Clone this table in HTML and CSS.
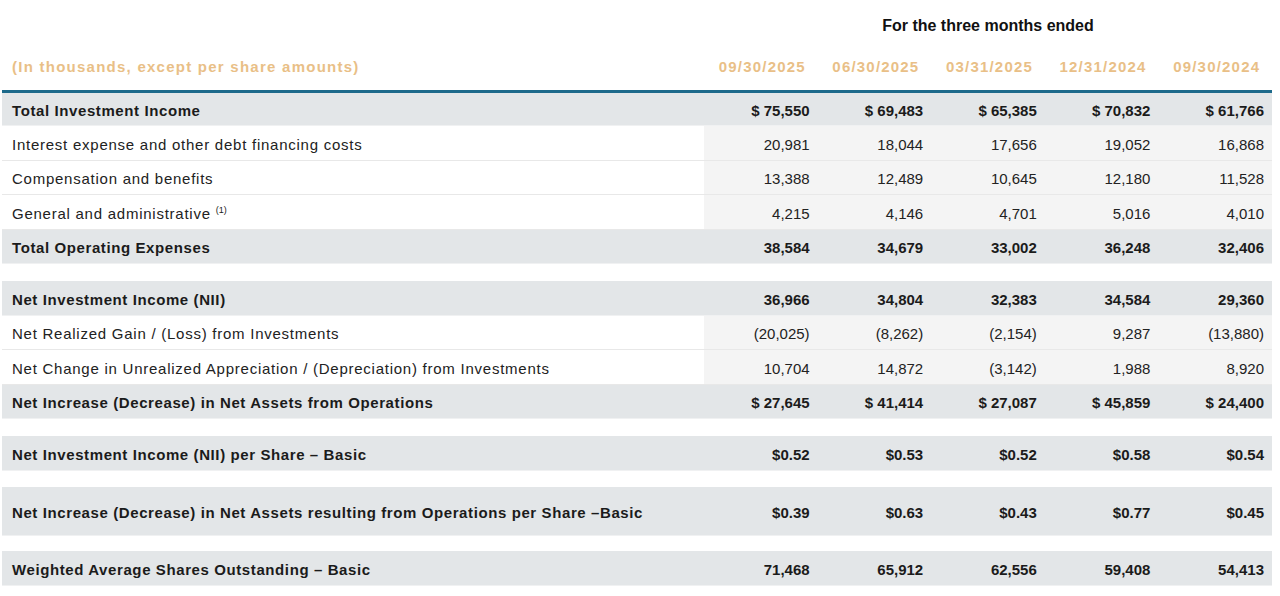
FILE: index.html
```html
<!DOCTYPE html>
<html>
<head>
<meta charset="utf-8">
<link rel="stylesheet" href="styles.css">
</head>
<body>
<div class="wrap">
<table class="fin">
  <colgroup>
    <col class="c-label"><col class="c-num"><col class="c-num"><col class="c-num"><col class="c-num"><col class="c-num">
  </colgroup>
  <thead>
    <tr class="period">
      <th></th>
      <th colspan="5">For the three months ended</th>
    </tr>
    <tr class="dates">
      <th class="label">(In thousands, except per share amounts)</th>
      <th>09/30/2025</th><th>06/30/2025</th><th>03/31/2025</th><th>12/31/2024</th><th>09/30/2024</th>
    </tr>
  </thead>
  <tbody>
    <tr class="total"><td>Total Investment Income</td><td>$ 75,550</td><td>$ 69,483</td><td>$ 65,385</td><td>$ 70,832</td><td>$ 61,766</td></tr>
    <tr class="item"><td>Interest expense and other debt financing costs</td><td>20,981</td><td>18,044</td><td>17,656</td><td>19,052</td><td>16,868</td></tr>
    <tr class="item"><td>Compensation and benefits</td><td>13,388</td><td>12,489</td><td>10,645</td><td>12,180</td><td>11,528</td></tr>
    <tr class="item"><td>General and administrative <sup>(1)</sup></td><td>4,215</td><td>4,146</td><td>4,701</td><td>5,016</td><td>4,010</td></tr>
    <tr class="total"><td>Total Operating Expenses</td><td>38,584</td><td>34,679</td><td>33,002</td><td>36,248</td><td>32,406</td></tr>
    <tr class="spacer"><td colspan="6"></td></tr>
    <tr class="total"><td>Net Investment Income (NII)</td><td>36,966</td><td>34,804</td><td>32,383</td><td>34,584</td><td>29,360</td></tr>
    <tr class="item"><td>Net Realized Gain / (Loss) from Investments</td><td>(20,025)</td><td>(8,262)</td><td>(2,154)</td><td>9,287</td><td>(13,880)</td></tr>
    <tr class="item"><td>Net Change in Unrealized Appreciation / (Depreciation) from Investments</td><td>10,704</td><td>14,872</td><td>(3,142)</td><td>1,988</td><td>8,920</td></tr>
    <tr class="total"><td>Net Increase (Decrease) in Net Assets from Operations</td><td>$ 27,645</td><td>$ 41,414</td><td>$ 27,087</td><td>$ 45,859</td><td>$ 24,400</td></tr>
    <tr class="spacer"><td colspan="6"></td></tr>
    <tr class="total"><td>Net Investment Income (NII) per Share – Basic</td><td>$0.52</td><td>$0.53</td><td>$0.52</td><td>$0.58</td><td>$0.54</td></tr>
    <tr class="spacer"><td colspan="6"></td></tr>
    <tr class="total tall"><td>Net Increase (Decrease) in Net Assets resulting from Operations per Share –Basic</td><td>$0.39</td><td>$0.63</td><td>$0.43</td><td>$0.77</td><td>$0.45</td></tr>
    <tr class="spacer short"><td colspan="6"></td></tr>
    <tr class="total"><td>Weighted Average Shares Outstanding – Basic</td><td>71,468</td><td>65,912</td><td>62,556</td><td>59,408</td><td>54,413</td></tr>
  </tbody>
</table>
</div>
</body>
</html>
```

FILE: styles.css
```css
html, body {
  margin: 0;
  padding: 0;
  background: #ffffff;
}

.wrap {
  padding: 0 8px 0 2px;
}

.fin {
  width: 1270px;
  border-collapse: collapse;
  table-layout: fixed;
  font-family: "Liberation Sans", Arial, sans-serif;
  color: #1b1b1b;
}

.c-label { width: 702px; }
.c-num { width: 113.6px; }

.fin th, .fin td {
  padding: 0;
  white-space: nowrap;
}

.fin .period th {
  height: 50px;
  box-sizing: border-box;
  padding-top: 2px;
  font-size: 16px;
  font-weight: bold;
  text-align: center;
  vertical-align: middle;
  color: #111;
}

.fin .dates th {
  height: 41px;
  box-sizing: border-box;
  padding: 0 0 6px 3px;
  font-size: 15px;
  font-weight: bold;
  letter-spacing: 1.2px;
  color: #e9bf87;
  text-align: center;
  vertical-align: middle;
  border-bottom: 3px solid #1d6a8b;
}

.fin .dates th.label {
  text-align: left;
  padding-left: 10px;
  letter-spacing: 1.25px;
}

.fin tbody td {
  height: 34.5px;
  box-sizing: border-box;
  font-size: 15px;
  text-align: right;
  padding: 3px 8px 0 0;
  vertical-align: middle;
}

.fin tbody td:first-child {
  text-align: left;
  padding-left: 10px;
  letter-spacing: 0.75px;
}

.fin .item td {
  border-bottom: 1px solid #e8e8e8;
  background: #f4f4f4;
  color: #222;
}

.fin .item td:first-child {
  background: #ffffff;
}

.fin .total td {
  background: #e3e6e8;
  font-weight: bold;
  border-bottom: 1px solid #f0f1f2;
}

.fin .total td:first-child {
  letter-spacing: 0.6px;
}

.fin .total.tall td {
  height: 48px;
}

.fin .spacer td {
  height: 17px;
  padding: 0;
  background: #ffffff;
  border: none;
}

.fin .spacer.short td {
  height: 16px;
}

sup {
  font-size: 9px;
  letter-spacing: 0;
  vertical-align: 6px;
  line-height: 0;
}
```
